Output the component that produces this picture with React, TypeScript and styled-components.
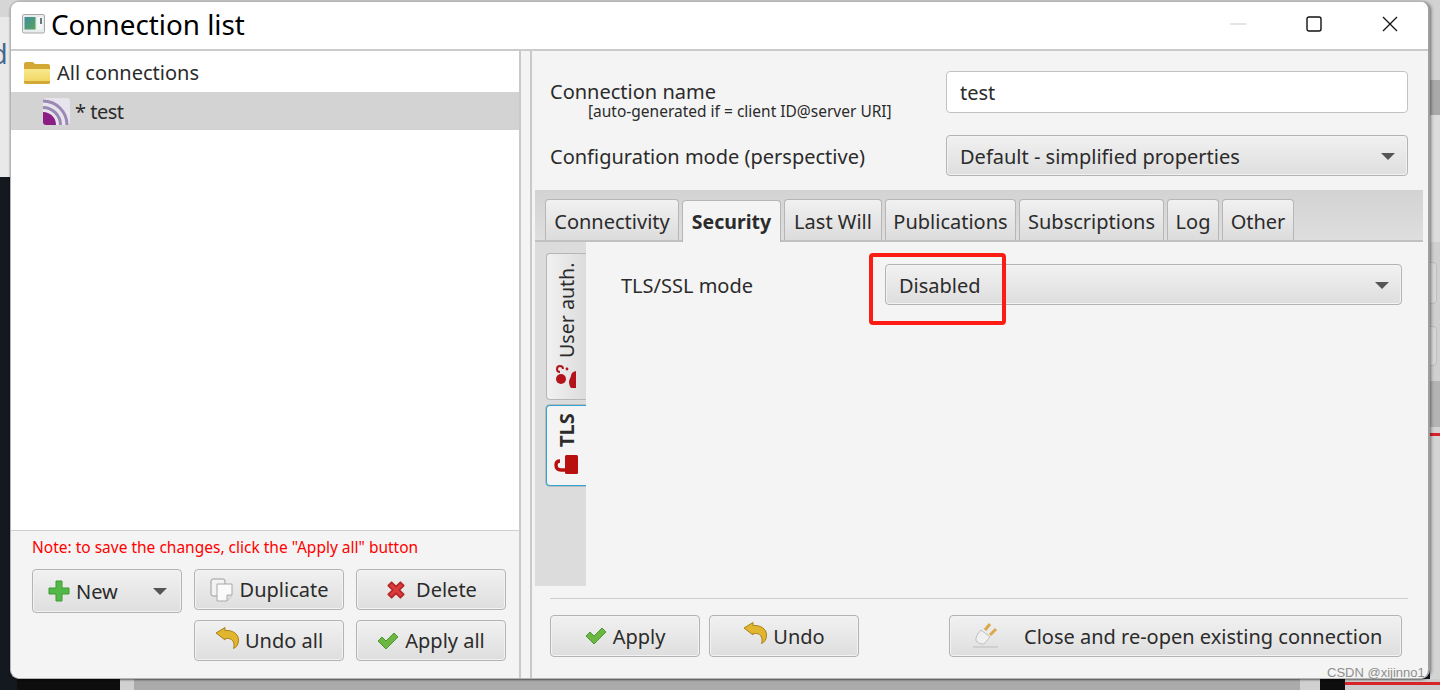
import React from 'react';
import styled, { createGlobalStyle } from 'styled-components';

const Global = createGlobalStyle`
  html, body { margin: 0; padding: 0; width: 1440px; height: 690px; overflow: hidden; background: #c9c9c9; }
  * { box-sizing: border-box; }
`;

const Desktop = styled.div`
  position: relative; width: 1440px; height: 690px; overflow: hidden;
  background: linear-gradient(#d6d6d6 0 17px, #e9e9e9 17px 177px, #14181f 177px);
  font-family: "Noto Sans", "Open Sans", sans-serif; color: #2b2b2b;
`;
const BackdropLetter = styled.div`
  position: absolute; left: -9px; top: 36px; font-size: 27px; line-height: 36px; color: #45688c;
`;
const BackdropRight = styled.div`
  position: absolute; left: 1430px; top: 0; right: 0; bottom: 0;
  background: linear-gradient(#d2d2d2 0 80px, #a9a9a9 80px 115px, #dcdcdc 115px 242px, #d0d0d0 242px 381px, #b4b4b4 381px 427px, #d4d4d4 427px);
`;
const BackdropKey = styled.div<{ $y: number; $h: number }>`
  position: absolute; left: 1426px; top: ${p => p.$y}px; width: 11px; height: ${p => p.$h}px;
  border: 1px solid #bdbdbd; border-radius: 4px; background: #d8d8d8;
`;
const BackdropBlack = styled.div`
  position: absolute; left: 17px; top: 679px; width: 103px; height: 11px; background: #0e0e0f;
`;
const BackdropBottom = styled.div`
  position: absolute; left: 120px; top: 679px; width: 1200px; height: 11px;
  background: linear-gradient(to right, #d0d0d0 0 14px, #ababab 14px 1180px, #d0d0d0 1180px);
`;
const BackdropBottomRight = styled.div`
  position: absolute; left: 1320px; top: 679px; right: 0; height: 11px;
  background: linear-gradient(to right, #0e0e0f 0 25px, #cccccc 25px);
`;
const RedLine = styled.div<{ $y: number; $x: number }>`
  position: absolute; left: ${p => p.$x}px; right: 0; top: ${p => p.$y}px; height: 3px; background: #d8232a;
`;
const Window = styled.div`
  position: absolute; left: 10px; top: 1px; width: 1420px; height: 678px;
  display: flex; flex-direction: column; overflow: hidden;
  border-radius: 9px; border: 1px solid #b4b4b4; border-right: 2px solid #9f9f9f; background: #f4f4f4;
  box-shadow: 0 1px 2px rgba(0,0,0,.45), 2px 0 3px rgba(0,0,0,.25);
`;
const TitleBar = styled.div`
  height: 49px; flex: none; background: #fff; border-bottom: 2px solid #cbcbcb;
  display: flex; align-items: center; padding: 0 0 4px 11px;
`;
const Title = styled.div`
  font-size: 27.8px; color: #000; flex: 1; line-height: 36px; margin-left: 6px;
`;
const CaptionBtn = styled.div`
  width: 76px; height: 46px; display: flex; align-items: center; justify-content: center;
`;
const Body = styled.div`
  flex: 1; min-height: 0; display: flex;
`;
const LeftPane = styled.div`
  width: 508px; flex: none; display: flex; flex-direction: column;
`;
const TreeArea = styled.div`
  flex: 1; background: #fff; padding-top: 2px; border-bottom: 1px solid #cfcfcf;
`;
const TreeRow = styled.div<{ $sel?: boolean; $indent: number }>`
  height: ${p => (p.$sel ? 38 : 39)}px; display: flex; align-items: center; gap: ${p => (p.$sel ? 5 : 6)}px;
  padding-left: ${p => p.$indent}px; font-size: 20px; line-height: 26px;
  background: ${p => (p.$sel ? '#d3d3d3' : '#fff')}; color: #2b2b2b;
  letter-spacing: ${p => (p.$sel ? '-0.5px' : '0')};
`;
const TreeText = styled.span<{ $nudge?: number }>`
  padding-top: ${p => p.$nudge ?? 0}px;
`;
const Note = styled.div`
  color: #f00; font-size: 15.5px; line-height: 20px; margin: 6px 0 0 21px;
`;
const ButtonGrid = styled.div`
  display: grid; grid-template-columns: 150px 150px 150px; column-gap: 12px; row-gap: 10px;
  margin: 12px 0 17px 21px; grid-auto-rows: 41px;
`;
const Btn = styled.div<{ $w?: number; $gap?: number; $h?: number }>`
  height: ${p => p.$h ?? 42}px; ${p => (p.$w ? `width: ${p.$w}px;` : '')}
  display: flex; align-items: center; justify-content: center; gap: ${p => p.$gap ?? 6}px;
  border: 1px solid #b3b3b3; border-radius: 4px; font-size: 20px; color: #2b2b2b;
  background: linear-gradient(#f1f1f1, #dedede);
  box-shadow: inset 0 0 0 1px #f3f3f3;
`;
const NewBtn = styled(Btn)`
  justify-content: flex-start; padding-left: 15px; position: relative;
`;
const CloseBtn = styled(Btn)`
  justify-content: flex-start; padding-left: 22px;
`;
const Arrow = styled.span`
  width: 0; height: 0; border-left: 7px solid transparent; border-right: 7px solid transparent;
  border-top: 7px solid #555;
`;
const NewArrow = styled(Arrow)`
  position: absolute; right: 14px; top: 18px;
`;
const Divider = styled.div`
  width: 13px; flex: none; background: #f4f4f4; border-left: 2px solid #c9c9c9; border-right: 2px solid #c9c9c9;
`;
const RightPane = styled.div`
  flex: 1; min-width: 0; display: flex; flex-direction: column;
`;
const Form = styled.div`
  height: 139px; flex: none; padding: 20px 20px 0 18px; display: flex; flex-direction: column; gap: 17px;
`;
const FormRow = styled.div`
  display: flex; justify-content: space-between; align-items: flex-start;
`;
const LabelBlock = styled.div`
  font-size: 20px; line-height: 24px; padding-top: 9px;
`;
const ModeLabel = styled(LabelBlock)`
  padding-top: 10px;
`;
const SubLabel = styled.div`
  font-size: 15.5px; line-height: 14px; margin-left: 38px;
`;
const TextInput = styled.div`
  width: 462px; height: 42px; background: #fff; border: 1px solid #c2c2c2; border-radius: 4px;
  font-size: 20px; padding-left: 13px; display: flex; align-items: center;
`;
const Select = styled(Btn)<{ $sw: number }>`
  width: ${p => p.$sw}px; justify-content: space-between; padding: 2px 12px 0 13px;
`;
const TabHost = styled.div`
  margin-left: 3px; display: flex; flex-direction: column;
  width: 888px; height: 396px; flex: none; background: linear-gradient(#d3d3d3, #dedede 50px);
`;
const TabStrip = styled.div`
  height: 52px; flex: none; display: flex; align-items: flex-end; padding-left: 10px; gap: 3px;
  border-bottom: 2px solid #c1c1c1;
`;
const Tab = styled.div<{ $w: number; $active?: boolean }>`
  width: ${p => p.$w}px; height: ${p => (p.$active ? 42 : 41)}px; display: flex; align-items: center; justify-content: center;
  font-size: ${p => (p.$active ? 19.5 : 20)}px; font-weight: ${p => (p.$active ? 700 : 400)};
  padding-top: ${p => (p.$active ? 0 : 3)}px;
  border: 1px solid #b6b6b6; border-bottom: none; border-radius: 4px 4px 0 0;
  background: ${p => (p.$active ? '#f4f4f4' : 'linear-gradient(#f1f1f1, #dcdcdc)')};
  ${p => (p.$active ? 'margin-bottom: -2px;' : '')}
`;
const TabBody = styled.div`
  flex: 1; min-height: 0; display: flex; background: #dcdcdc;
`;
const SideRail = styled.div`
  width: 51px; flex: none; padding: 11px 0 0 11px; display: flex; flex-direction: column; gap: 5px; background: #dcdcdc;
`;
const SideTab = styled.div<{ $h: number; $pad: number; $gap: number; $active?: boolean }>`
  width: 40px; height: ${p => p.$h}px; display: flex; align-items: center; justify-content: flex-start; gap: ${p => p.$gap}px;
  writing-mode: vertical-rl; transform: rotate(180deg);
  padding-top: ${p => p.$pad}px; font-size: ${p => (p.$active ? 20 : 19.6)}px; font-weight: ${p => (p.$active ? 700 : 400)};
  border-radius: 0 4px 4px 0; border: 1px solid ${p => (p.$active ? '#2fa5d3' : '#b6b6b6')}; border-left: none;
  background: ${p => (p.$active ? '#f4f4f4' : 'linear-gradient(to left, #f1f1f1, #dcdcdc)')};
  box-shadow: ${p => (p.$active ? '0 0 0 1px #bcbcbc' : 'none')};
`;
const SideIcon = styled.svg`
  flex: none; transform: rotate(180deg);
`;
const TabContent = styled.div`
  flex: 1; min-width: 0; background: #f4f4f4; padding: 22px 21px 0 35px; display: flex; justify-content: space-between; align-items: flex-start;
  position: relative;
`;
const TlsLabel = styled.div`
  font-size: 20px; line-height: 44px;
`;
const Footer = styled.div`
  flex: 1; min-height: 0; margin: 0 20px 0 18px;
`;
const FooterRule = styled.div`
  height: 1px; background: #cfcfcf; margin-top: 12px;
`;
const FooterRow = styled.div`
  display: flex; margin-top: 16px; gap: 9px; padding-right: 6px;
`;
const Spacer = styled.div`
  flex: 1;
`;
const CloseLabel = styled.span`
  margin-left: 18px;
`;
const RaisedIcon = styled.svg`
  margin-top: -6px;
`;
const Annotation = styled.div`
  position: absolute; left: 869px; top: 253px; width: 137px; height: 72px;
  border: 4px solid #fd1c14; border-radius: 4px;
`;
const Watermark = styled.div`
  position: absolute; left: 1327px; top: 665px; font-family: "Liberation Sans", sans-serif; font-size: 13px; color: #8e8e8e;
`;

const Check = () => (
  <svg width="22" height="20" viewBox="0 0 22 20">
    <path d="M1 10 L5 6 L9 10 L17 2 L21 6 L9 18 Z" fill="#6cb644" stroke="#4c9a2f" strokeWidth="1" strokeLinejoin="round" />
  </svg>
);
const UndoIcon = () => (
  <RaisedIcon width="24" height="22" viewBox="0 0 24 22">
    <path d="M1 6 L10 0.5 L10 3.5 C18 3 23.5 7 23.5 13 C23.5 17 22 20 18.5 21.5 C20 17 18.5 12 13.5 11.5 C12 11.5 11 11.5 10 11.5 L10 13 Z" fill="#e2b52e" stroke="#a9801a" strokeWidth="1" strokeLinejoin="round" />
  </RaisedIcon>
);
const Plus = () => (
  <svg width="22" height="22" viewBox="0 0 22 22">
    <path d="M8 1 H14 V8 H21 V14 H14 V21 H8 V14 H1 V8 H8 Z" fill="#52b948" stroke="#3c9a32" strokeWidth="1" strokeLinejoin="round" />
  </svg>
);
const Cross = () => (
  <svg width="22" height="22" viewBox="0 0 20 20">
    <path d="M3 6 L6 3 L10 7 L14 3 L17 6 L13 10 L17 14 L14 17 L10 13 L6 17 L3 14 L7 10 Z" fill="#dc3b3b" stroke="#b52626" strokeWidth="1.6" strokeLinejoin="round" />
  </svg>
);
const Copy = () => (
  <svg width="24" height="24" viewBox="0 0 24 24">
    <rect x="1" y="1" width="14" height="17" rx="2" fill="#f2f2f2" stroke="#9c9c9c" />
    <path d="M7 6 H22 V17 L17 23 H7 Z" fill="#fafafa" stroke="#a8a8a8" strokeLinejoin="round" />
    <path d="M17 23 V17 H22" fill="#e0e0e0" stroke="#a8a8a8" />
  </svg>
);
const Plug = () => (
  <svg width="28" height="28" viewBox="0 0 28 28">
    <path d="M9 8 L18 15 L12 22 Q8 23 4 19 Q3 14 9 8 Z" fill="#f0f0f0" stroke="#c0c0c0" />
    <path d="M13 8 L18 2 M18 13 L24 7" stroke="#dca84c" strokeWidth="3" />
    <path d="M1 25 H26" stroke="#c8c8c8" strokeWidth="1.5" />
  </svg>
);

export default function App() {
  return (
    <Desktop>
      <Global />
      <BackdropLetter>d</BackdropLetter>
      <BackdropRight />
      <BackdropKey $y={262} $h={42} />
      <BackdropKey $y={326} $h={40} />
      <BackdropBlack />
      <BackdropBottom />
      <BackdropBottomRight />
      <RedLine $y={433} $x={1430} />
      <RedLine $y={682} $x={1345} />
      <Window>
        <TitleBar>
          <svg width="23" height="20" viewBox="0 0 23 20">
            <defs>
              <linearGradient id="titleFill" x1="0" y1="0" x2="1" y2="1">
                <stop offset="0" stopColor="#3c8e9c" />
                <stop offset="1" stopColor="#5aa35e" />
              </linearGradient>
            </defs>
            <rect x="0.5" y="0.5" width="22" height="18.5" rx="1.5" fill="#e9ecee" stroke="#a8a8a8" />
            <rect x="2.5" y="3" width="11" height="12.5" fill="url(#titleFill)" />
            <rect x="15" y="3" width="5.5" height="12.5" fill="#f5f7f7" />
            <rect x="18" y="4" width="2" height="6" fill="#5f7d7d" />
          </svg>
          <Title>Connection list</Title>
          <CaptionBtn>
            <svg width="16" height="16" viewBox="0 0 16 16"><path d="M0 8 H16" stroke="#c9c9c9" /></svg>
          </CaptionBtn>
          <CaptionBtn>
            <svg width="16" height="16" viewBox="0 0 16 16"><rect x="1" y="1" width="14" height="14" rx="2" fill="none" stroke="#111" strokeWidth="1.4" /></svg>
          </CaptionBtn>
          <CaptionBtn>
            <svg width="16" height="16" viewBox="0 0 16 16"><path d="M1 1 L15 15 M15 1 L1 15" stroke="#111" strokeWidth="1.3" /></svg>
          </CaptionBtn>
        </TitleBar>
        <Body>
          <LeftPane>
            <TreeArea>
              <TreeRow $indent={12}>
                <svg width="28" height="24" viewBox="0 0 28 24">
                  <defs>
                    <linearGradient id="folderFill" x1="0" y1="0" x2="0" y2="1">
                      <stop offset="0" stopColor="#f8e98c" />
                      <stop offset="1" stopColor="#f1d766" />
                    </linearGradient>
                  </defs>
                  <path d="M1 3 Q1 1 3 1 H10 L12 3 H25 Q27 3 27 5 V22 Q27 23 25 23 H3 Q1 23 1 22 Z" fill="#d3a835" />
                  <path d="M1 8 H27 V20 H1 Z" fill="url(#folderFill)" />
                </svg>
                All connections
              </TreeRow>
              <TreeRow $indent={32} $sel>
                <svg width="27" height="27" viewBox="0 0 27 27">
                  <rect width="27" height="27" rx="3" fill="#e8e4ee" />
                  <path d="M0 16 A11 11 0 0 1 11 27 M0 9.5 A17.5 17.5 0 0 1 17.5 27 M0 3 A24 24 0 0 1 24 27" fill="none" stroke="#9a8ab3" strokeWidth="3" />
                  <path d="M0 14 A13 13 0 0 1 13 27 H3 Q0 27 0 24 Z" fill="#8c1d85" />
                </svg>
                <TreeText $nudge={2}>* test</TreeText>
              </TreeRow>
            </TreeArea>
            <Note>Note: to save the changes, click the "Apply all" button</Note>
            <ButtonGrid>
              <NewBtn $h={44}><Plus />New<NewArrow /></NewBtn>
              <Btn $h={41}><Copy />Duplicate</Btn>
              <Btn $h={41} $gap={9}><Cross />Delete</Btn>
              <span />
              <Btn $h={41}><UndoIcon />Undo all</Btn>
              <Btn $h={41}><Check />Apply all</Btn>
            </ButtonGrid>
          </LeftPane>
          <Divider />
          <RightPane>
            <Form>
              <FormRow>
                <LabelBlock>
                  Connection name
                  <SubLabel>[auto-generated if = client ID@server URI]</SubLabel>
                </LabelBlock>
                <TextInput>test</TextInput>
              </FormRow>
              <FormRow>
                <ModeLabel>Configuration mode (perspective)</ModeLabel>
                <Select $sw={462} $h={41}>Default - simplified properties<Arrow /></Select>
              </FormRow>
            </Form>
            <TabHost>
              <TabStrip>
                <Tab $w={134}>Connectivity</Tab>
                <Tab $w={99} $active>Security</Tab>
                <Tab $w={98}>Last Will</Tab>
                <Tab $w={131}>Publications</Tab>
                <Tab $w={145}>Subscriptions</Tab>
                <Tab $w={52}>Log</Tab>
                <Tab $w={72}>Other</Tab>
              </TabStrip>
              <TabBody>
                <SideRail>
                  <SideTab $h={147} $pad={10} $gap={6}>
                    <SideIcon width="22" height="25" viewBox="0 0 22 25">
                      <circle cx="6" cy="15" r="5" fill="#b3141c" />
                      <path d="M21 7 Q16 8 16 12 L14 17 Q14 22 16 24 H21 Z" fill="#b3141c" />
                      <path d="M5 8 Q2 8 2 5 Q2 2 5 2 Q8 2 8 5" fill="none" stroke="#b3141c" strokeWidth="2" />
                      <circle cx="12" cy="5" r="1.4" fill="#b3141c" />
                    </SideIcon>
                    User auth.
                  </SideTab>
                  <SideTab $h={81} $pad={11} $gap={8} $active>
                    <SideIcon width="24" height="19" viewBox="0 0 24 19">
                      <rect x="11" y="0" width="13" height="19" rx="1.5" fill="#b80f0f" />
                      <path d="M12 15 H7 Q2 15 2 10 Q2 6 6 6" fill="none" stroke="#b80f0f" strokeWidth="3.4" />
                    </SideIcon>
                    TLS
                  </SideTab>
                </SideRail>
                <TabContent>
                  <TlsLabel>TLS/SSL mode</TlsLabel>
                  <Select $sw={517} $h={41}>Disabled<Arrow /></Select>
                </TabContent>
              </TabBody>
            </TabHost>
            <Footer>
              <FooterRule />
              <FooterRow>
                <Btn $w={150}><Check />Apply</Btn>
                <Btn $w={150}><UndoIcon />Undo</Btn>
                <Spacer />
                <CloseBtn $w={453}><Plug /><CloseLabel>Close and re-open existing connection</CloseLabel></CloseBtn>
              </FooterRow>
            </Footer>
          </RightPane>
        </Body>
      </Window>
      <Annotation />
      <Watermark>CSDN @xijinno1</Watermark>
    </Desktop>
  );
}
